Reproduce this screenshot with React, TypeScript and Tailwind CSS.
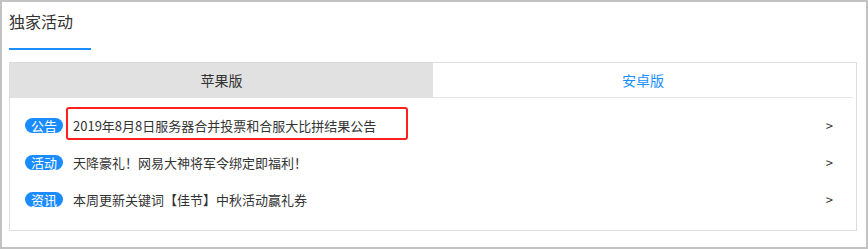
import React from "react";

const rows = [
  { tag: "公告", text: "2019年8月8日服务器合并投票和合服大比拼结果公告", mark: true },
  { tag: "活动", text: "天降豪礼！网易大神将军令绑定即福利！" },
  { tag: "资讯", text: "本周更新关键词【佳节】中秋活动赢礼券" },
];

export default function App() {
  return (
    <div
      className="w-[868px] h-[249px] box-border border-2 border-[#c2c2c2] bg-white pl-[7px] text-[#333]"
      style={{ fontFamily: '"Noto Sans CJK SC", "Noto Sans", sans-serif' }}
    >
      <div className="w-[82px] pt-[7px] pb-[15px] border-b-2 border-[#1890ff]">
        <div className="text-[16px] leading-[24px]">独家活动</div>
      </div>
      <div className="mt-[12px] w-[848px] h-[169px] border border-[#dcdcdc] flex flex-col">
        <div className="flex h-[35px] shrink-0">
          <div className="w-[423px] bg-[#e1e1e1] flex items-center justify-center text-[14px] text-[#333]">
            苹果版
          </div>
          <div className="flex-1 mr-[3px] border-b border-[#e6e6e6] flex items-center justify-center text-[14px] text-[#1890ff]">
            安卓版
          </div>
        </div>
        <div className="pt-[9px] flex flex-col">
          {rows.map((r) => (
            <div key={r.tag} className="relative h-[37px] flex items-center pl-[15px] pr-[23px]">
              <span className="w-[38px] h-[15px] rounded-full bg-[#1a8cff] text-white text-[13px] leading-[15px] flex items-center justify-center shrink-0">
                {r.tag}
              </span>
              <span className="ml-[10px] text-[13px] leading-[18px] text-[#333] flex-1">{r.text}</span>
              <span className="text-[13px] leading-[18px] text-[#333]">&gt;</span>
              {r.mark && (
                <div className="absolute left-[56px] top-0 w-[342px] h-[33px] border-2 border-[#ff1f1f] rounded-[3px]" />
              )}
            </div>
          ))}
        </div>
      </div>
    </div>
  );
}
